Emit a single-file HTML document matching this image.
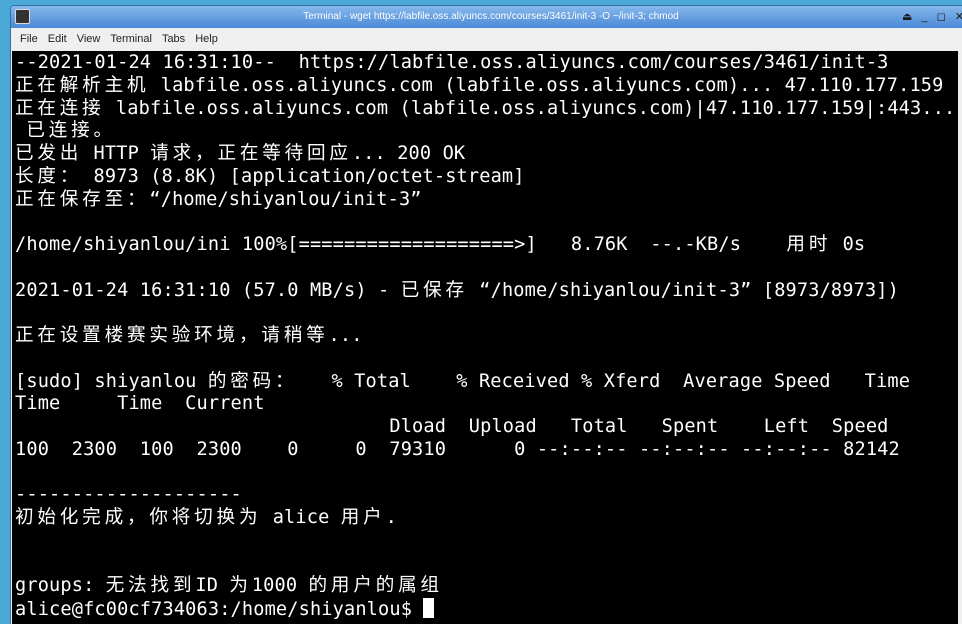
<!DOCTYPE html>
<html><head><meta charset="utf-8"><style>
html,body{margin:0;width:962px;height:624px;overflow:hidden}
body{background:#4aa9d6;position:relative;font-family:"Liberation Sans",sans-serif}
.win{position:absolute;left:10px;top:5px;width:960px;height:625px;background:#efefef;border-radius:4px 0 0 0;border:1px solid #2f6fb0}
.title{height:22px;background:linear-gradient(#86b8ec,#4b89d6);color:#fff;font-size:10px;line-height:22px;text-align:center;position:relative;border-radius:4px 0 0 0}
.icon{position:absolute;left:4px;top:3px;width:13px;height:13px;background:#333;border:1px solid #ddd;border-radius:2px}
.ctrl{position:absolute;right:4px;top:0;color:#1a1a1a;font-size:11px;letter-spacing:3px;padding-left:6px}
.menu{height:23px;font-size:11px;color:#222;line-height:23px;padding-left:9px}
.menu span{margin-right:10px}
.term{position:absolute;left:1px;top:45px;width:946px;height:575px;background:#000;color:#fff;font-family:"DejaVu Sans Mono",monospace;font-size:18.6px;line-height:22.75px;letter-spacing:0.15px;white-space:pre;padding:1px 0 0 3px;box-sizing:border-box;overflow:hidden}
.c{font-family:"Noto Sans CJK SC",sans-serif;letter-spacing:3.8px;line-height:0}
.cur{background:#fff;display:inline-block;width:11px;height:20px;vertical-align:-3px}
</style></head><body>
<div class="win">
<div class="title"><div class="icon"></div>Terminal - wget https://labfile.oss.aliyuncs.com/courses/3461/init-3 -O ~/init-3; chmod<div class="ctrl">⏏ _ ◻ ✕</div></div>
<div class="menu"><span>File</span><span>Edit</span><span>View</span><span>Terminal</span><span>Tabs</span><span>Help</span></div>
<div class="term">--2021-01-24 16:31:10--  https://labfile.oss.aliyuncs.com/courses/3461/init-3
<span class="c">正在解析主机</span> labfile.oss.aliyuncs.com (labfile.oss.aliyuncs.com)... 47.110.177.159
<span class="c">正在连接</span> labfile.oss.aliyuncs.com (labfile.oss.aliyuncs.com)|47.110.177.159|:443...
 <span class="c">已连接。</span>
<span class="c">已发出</span> HTTP <span class="c">请求，正在等待回应</span>... 200 OK
<span class="c">长度：</span> 8973 (8.8K) [application/octet-stream]
<span class="c">正在保存至：</span>“/home/shiyanlou/init-3”

/home/shiyanlou/ini 100%[===================>]   8.76K  --.-KB/s    <span class="c">用时</span> 0s

2021-01-24 16:31:10 (57.0 MB/s) - <span class="c">已保存</span> “/home/shiyanlou/init-3” [8973/8973])

<span class="c">正在设置楼赛实验环境，请稍等</span>...

[sudo] shiyanlou <span class="c">的密码：</span>   % Total    % Received % Xferd  Average Speed   Time
Time     Time  Current
                                 Dload  Upload   Total   Spent    Left  Speed
100  2300  100  2300    0     0  79310      0 --:--:-- --:--:-- --:--:-- 82142

--------------------
<span class="c">初始化完成，你将切换为</span> alice <span class="c">用户</span>.


groups: <span class="c">无法找到</span>ID <span class="c">为</span>1000 <span class="c">的用户的属组</span>
alice@fc00cf734063:/home/shiyanlou$ <span class="cur"></span></div>
</div>
</body></html>
